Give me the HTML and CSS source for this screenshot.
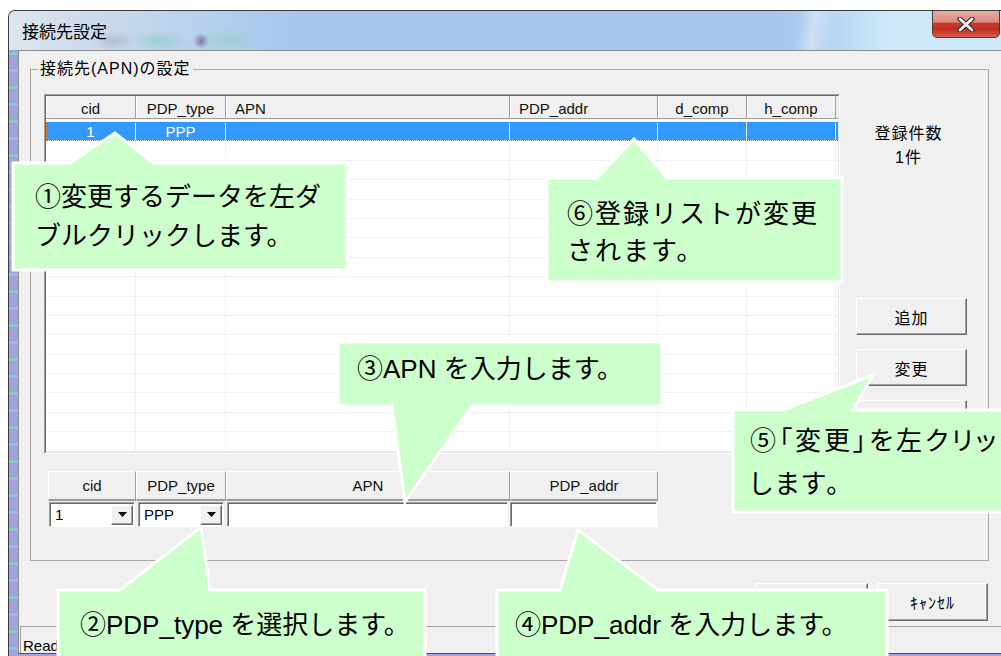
FILE: index.html
```html
<!DOCTYPE html>
<html lang="ja">
<head>
  <meta charset="UTF-8">
  <title>接続先設定</title>
  <link rel="stylesheet" href="styles.css">
</head>
<body>
  <div class="window">
    <div class="titlebar">
      <span class="title">接続先設定</span>
      <button class="close">
        <svg width="18" height="15" viewBox="0 0 18 15">
          <path d="M3 2 L15 13 M15 2 L3 13" stroke="#3a2c2c" stroke-width="5" stroke-linecap="round"/>
          <path d="M3 2 L15 13 M15 2 L3 13" stroke="#fff" stroke-width="2.6" stroke-linecap="round"/>
        </svg>
      </button>
    </div>

    <div class="client">
      <fieldset class="group">
        <legend>接続先(APN)の設定</legend>
        <div class="group-body">
          <div class="group-top">
            <div class="listview">
              <div class="lv-inner">
                <div class="lv-head">
                  <div class="center">cid</div>
                  <div class="center">PDP_type</div>
                  <div>APN</div>
                  <div>PDP_addr</div>
                  <div class="center">d_comp</div>
                  <div class="center">h_comp</div>
                </div>
                <div class="lv-rows">
                  <div class="lv-row sel"><span>1</span><span>PPP</span><span></span><span></span><span></span><span></span></div>
                  <div class="lv-row"><span></span><span></span><span></span><span></span><span></span><span></span></div>
                  <div class="lv-row"><span></span><span></span><span></span><span></span><span></span><span></span></div>
                  <div class="lv-row"><span></span><span></span><span></span><span></span><span></span><span></span></div>
                  <div class="lv-row"><span></span><span></span><span></span><span></span><span></span><span></span></div>
                  <div class="lv-row"><span></span><span></span><span></span><span></span><span></span><span></span></div>
                  <div class="lv-row"><span></span><span></span><span></span><span></span><span></span><span></span></div>
                  <div class="lv-row"><span></span><span></span><span></span><span></span><span></span><span></span></div>
                  <div class="lv-row"><span></span><span></span><span></span><span></span><span></span><span></span></div>
                  <div class="lv-row"><span></span><span></span><span></span><span></span><span></span><span></span></div>
                  <div class="lv-row"><span></span><span></span><span></span><span></span><span></span><span></span></div>
                  <div class="lv-row"><span></span><span></span><span></span><span></span><span></span><span></span></div>
                  <div class="lv-row"><span></span><span></span><span></span><span></span><span></span><span></span></div>
                  <div class="lv-row"><span></span><span></span><span></span><span></span><span></span><span></span></div>
                  <div class="lv-row"><span></span><span></span><span></span><span></span><span></span><span></span></div>
                  <div class="lv-row"><span></span><span></span><span></span><span></span><span></span><span></span></div>
                  <div class="lv-row"><span></span><span></span><span></span><span></span><span></span><span></span></div>
                </div>
              </div>
            </div>

            <div class="side">
              <div class="count">登録件数<br>1件</div>
              <button class="btn">追加</button>
              <button class="btn">変更</button>
              <button class="btn">削除</button>
            </div>
          </div>

          <div class="edit">
            <div class="eh">cid</div>
            <div class="eh">PDP_type</div>
            <div class="eh">APN</div>
            <div class="eh">PDP_addr</div>
            <div class="combo c-cid">1<span class="drop"><svg width="9" height="5" viewBox="0 0 9 5"><polygon points="0,0 9,0 4.5,5" fill="#000"/></svg></span></div>
            <div class="combo c-type">PPP<span class="drop"><svg width="9" height="5" viewBox="0 0 9 5"><polygon points="0,0 9,0 4.5,5" fill="#000"/></svg></span></div>
            <div class="field f-apn"></div>
            <div class="field f-addr"></div>
          </div>
        </div>
      </fieldset>

      <div class="actions">
        <button class="btn wide">OK</button>
        <button class="btn">ｷｬﾝｾﾙ</button>
      </div>

      <div class="status">Ready</div>
    </div>
  </div>

  <!-- 説明の吹き出し -->
  <svg class="callouts" width="1001" height="656" viewBox="0 0 1001 656">
    <polygon points="13,163 70,163 115,133 153,163 347,163 347,270 13,270"/>
    <polygon points="547,178 597,178 634,139 667,178 842,178 842,282 547,282"/>
    <polygon points="338,342 662,342 662,406 472,406 405,502 392,406 338,406"/>
    <polygon points="733,410 783,410 873,375 853,410 1012,410 1012,512 733,512"/>
    <polygon points="58,590 120,590 201,527 210,590 425,590 425,670 58,670"/>
    <polygon points="497,590 560,590 578,530 658,590 887,590 887,670 497,670"/>
  </svg>
  <div class="note jp n1">①変更するデータを左ダ<br>ブルクリックします。</div>
  <div class="note jp n6">⑥登録リストが変更<br>されます。</div>
  <div class="note n3">③APN を入力します。</div>
  <div class="note jp n5">⑤「変更」を左クリック<br>します。</div>
  <div class="note n2">②PDP_type を選択します。</div>
  <div class="note n4">④PDP_addr を入力します。</div>
</body>
</html>
```

FILE: styles.css
```css
* {
  box-sizing: border-box;
}
body {
  margin: 0;
  width: 1001px;
  height: 656px;
  overflow: hidden;
  position: relative;
  background: #fff;
  font-family: "Liberation Sans", "Noto Sans CJK JP", sans-serif;
  color: #000;
}

/* window frame */
.window {
  margin: 10px 0 0 8px;
  width: 995px;
  height: 646px;
  padding-bottom: 2px;
  border-top: 1px solid #3c3c3c;
  border-left: 1px solid #3c3c3c;
  border-radius: 7px 0 0 0;
  background: repeating-linear-gradient(to bottom, #9ea4de 0 7px, #8ccaca 7px 10px, #a6a2e2 10px 17px);
  display: flex;
  flex-direction: column;
  overflow: hidden;
}
.titlebar {
  height: 41px;
  display: flex;
  align-items: flex-start;
  background:
    radial-gradient(ellipse 22px 10px at 105px 30px, rgba(140,140,150,.35), transparent),
    radial-gradient(ellipse 30px 11px at 150px 30px, rgba(110,200,180,.45), transparent),
    radial-gradient(ellipse 8px 8px at 192px 30px, rgba(110,80,130,.7), transparent),
    radial-gradient(ellipse 34px 13px at 218px 29px, rgba(140,205,185,.45), transparent),
    linear-gradient(100deg, transparent 780px, rgba(255,255,255,.35) 795px, transparent 815px),
    linear-gradient(90deg, #dfe6ec 0, #cfdcec 70px, #b0cdee 230px, #a6c6ec 290px, #a6c6ec 770px, #bad8f3 830px, #cde9f9 880px);
}
.title {
  margin: 10px 0 0 13px;
  font-family: "Noto Sans CJK JP", sans-serif;
  font-size: 17px;
  line-height: 20px;
}
.close {
  margin: -1px 3px 0 auto;
  width: 68px;
  height: 28px;
  padding: 0;
  border: 1px solid #5a3434;
  border-radius: 0 0 5px 5px;
  background: linear-gradient(to bottom, #e8aca4 0%, #d98a82 42%, #c73a2b 48%, #c03020 70%, #d8604f 100%);
  display: flex;
  align-items: center;
  justify-content: center;
}

/* client area */
.client {
  flex: 1;
  margin-left: 9px;
  background: #f0f0f0;
  border: 1px solid #8c8c8c;
  border-bottom-color: #505050;
  display: flex;
  flex-direction: column;
  font-size: 15px;
}
.group {
  margin: 9px 13px 0 11px;
  padding: 0;
  min-width: 0;
  border: 1px solid #a8a8a8;
}
.group legend {
  margin-left: 7px;
  padding: 0 2px;
  font-size: 16px;
  line-height: 18px;
  letter-spacing: 1px;
}
.group-body {
  padding: 16px 0 32px 13px;
}
.group-top {
  display: flex;
}

/* list view */
.listview {
  width: 796px;
  height: 360px;
  border: 1px solid;
  border-color: #a0a0a0 #fff #fff #a0a0a0;
}
.lv-inner {
  height: 100%;
  border: 1px solid;
  border-color: #696969 #e3e3e3 #e3e3e3 #696969;
  background: #fff;
  overflow: hidden;
}
.lv-head,
.lv-row {
  display: grid;
  grid-template-columns: 90px 90px 284px 148px 89px 89px;
}
.lv-head {
  height: 23px;
  background: #f0f0f0;
  border-bottom: 1px solid #a0a0a0;
  color: #111;
}
.lv-head div {
  padding: 3px 0 0 9px;
  line-height: 19px;
  border-right: 1px solid #a0a0a0;
  box-shadow: inset 1px 0 0 #fff;
}
.lv-head .center {
  padding-left: 0;
  text-align: center;
}
.lv-rows {
  padding-top: 3px;
}
.lv-row {
  height: 19.4px;
  border-bottom: 1px solid #f0f0f0;
}
.lv-row span {
  border-right: 1px solid #f0f0f0;
  padding-top: 1px;
  line-height: 18px;
  text-align: center;
}
.lv-row.sel {
  background: #3399ff;
  color: #fff;
  outline: 1px dotted #c8702a;
  outline-offset: -1px;
}

/* side panel */
.side {
  flex: 1;
  padding: 28px 0 0 16px;
}
.count {
  width: 111px;
  padding-right: 6px;
  text-align: center;
  font-size: 16px;
  line-height: 24px;
  letter-spacing: 1px;
  margin-bottom: 128px;
}
.btn {
  display: block;
  width: 111px;
  height: 37px;
  margin-bottom: 14px;
  padding: 0;
  border: 1px solid;
  border-color: #fff #696969 #696969 #fff;
  box-shadow: inset -1px -1px 0 #a0a0a0;
  background: #f0f0f0;
  font-family: "Liberation Sans", "Noto Sans CJK JP", sans-serif;
  font-size: 16px;
  letter-spacing: 1px;
  color: #000;
}

/* edit row */
.edit {
  margin: 17px 0 0 4px;
  display: grid;
  grid-template-columns: 88px 90px 284px 148px;
  grid-template-rows: 30px 27px;
}
.eh {
  border-top: 1px solid #fff;
  border-left: 1px solid #fff;
  border-right: 1px solid #a0a0a0;
  border-bottom: 2px solid #9a9a9a;
  text-align: center;
  line-height: 27px;
  color: #111;
}
.combo,
.field {
  margin-top: 1px;
  height: 25px;
  background: #fff;
  border: 1px solid;
  border-color: #a0a0a0 #fff #fff #a0a0a0;
  box-shadow: inset 1px 1px 0 #696969;
}
.combo {
  display: flex;
  align-items: center;
  padding-left: 5px;
}
.c-cid {
  margin-left: 1px;
  margin-right: 1px;
}
.c-type {
  margin-left: 2px;
  margin-right: 2px;
}
.f-apn {
  margin-left: 1px;
  margin-right: 2px;
}
.f-addr {
  margin-right: 1px;
}
.drop {
  margin-left: auto;
  margin-right: 1px;
  width: 22px;
  height: 20px;
  background: #f0f0f0;
  border: 1px solid;
  border-color: #fff #696969 #696969 #fff;
  box-shadow: inset -1px -1px 0 #a0a0a0;
  display: flex;
  align-items: center;
  justify-content: center;
}

/* bottom */
.actions {
  display: flex;
  justify-content: flex-end;
  gap: 9px;
  margin-top: 22px;
  padding-right: 14px;
}
.actions .btn {
  height: 38px;
  margin: 0;
}
.actions .wide {
  width: 112px;
}
.status {
  flex: 1;
  margin: 5px 0 0 1px;
  padding: 11px 0 0 2px;
  border-top: 1px solid #a0a0a0;
  border-left: 1px solid #a0a0a0;
  line-height: 15px;
}

/* callouts */
.callouts {
  position: absolute;
  left: 0;
  top: 0;
}
.callouts polygon {
  fill: #ccffcc;
  stroke: #fff;
  stroke-width: 3;
  stroke-linejoin: miter;
}
.note {
  position: absolute;
  font-size: 26px;
  line-height: 30px;
  white-space: nowrap;
}
.note.jp {
  font-family: "Noto Sans CJK JP", sans-serif;
}
.n1 {
  left: 35px;
  top: 175px;
  line-height: 39px;
}
.n6 {
  left: 567px;
  top: 193px;
  line-height: 37px;
  letter-spacing: 2px;
}
.n5 {
  left: 750px;
  top: 417px;
  line-height: 43px;
  font-feature-settings: "palt";
  letter-spacing: 3px;
}
.n3 {
  left: 357px;
  top: 354px;
}
.n2 {
  left: 80px;
  top: 610px;
}
.n4 {
  left: 515px;
  top: 610px;
}
```
